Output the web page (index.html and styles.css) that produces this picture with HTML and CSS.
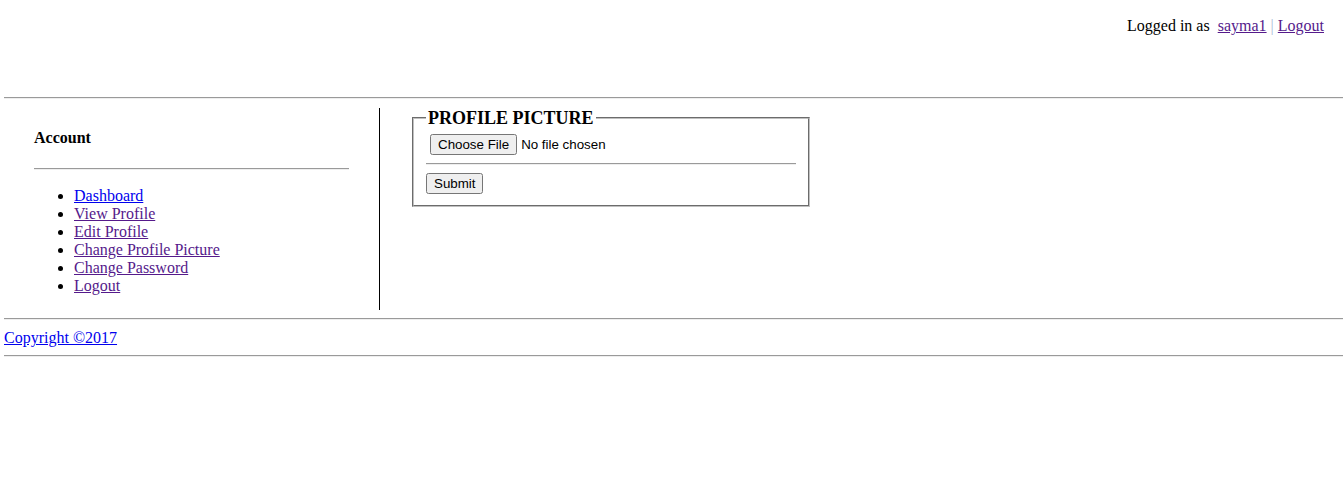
FILE: index.html
```html
<!DOCTYPE html>
<html>
<head>
<meta charset="utf-8">
<title>Change Profile Picture</title>
<link rel="stylesheet" href="styles.css">
</head>
<body>
<div class="page">
  <div class="header">
    <span class="login">Logged in as&nbsp; <a class="visited" href="#">sayma1</a> <span class="sep">|</span> <a class="visited" href="#">Logout</a></span>
  </div>
  <hr class="rule top-rule">
  <div class="main">
    <div class="sidebar">
      <h4 class="side-title">Account</h4>
      <hr class="rule side-rule">
      <ul class="menu">
        <li><a class="link" href="#">Dashboard</a></li>
        <li><a class="visited" href="#">View Profile</a></li>
        <li><a class="visited" href="#">Edit Profile</a></li>
        <li><a class="visited" href="#">Change Profile Picture</a></li>
        <li><a class="visited" href="#">Change Password</a></li>
        <li><a class="visited" href="#">Logout</a></li>
      </ul>
    </div>
    <div class="content">
      <form class="pic-form">
        <fieldset class="box">
          <legend class="box-legend">PROFILE PICTURE</legend>
          <input class="file" type="file">
          <hr class="rule form-rule">
          <input class="submit" type="submit" value="Submit">
        </fieldset>
      </form>
    </div>
  </div>
  <hr class="rule">
  <div class="footer"><a class="link" href="#">Copyright ©2017</a></div>
  <hr class="rule">
</div>
</body>
</html>
```

FILE: styles.css
```css
html, body {
  margin: 0;
  padding: 0;
  background: #fff;
}
body {
  font-family: "Liberation Serif", "Times New Roman", serif;
  font-size: 16px;
  color: #000;
}
.page {
  padding-left: 4px;
}
.link { color: #0000ee; }
.visited { color: #551a8b; }
.rule {
  height: 0;
  margin: 8px 0;
  border: 0;
  border-top: 1px solid #9a9a9a;
  border-bottom: 1px solid #eeeeee;
}
.header {
  height: 97px;
  box-sizing: border-box;
  padding-top: 17px;
  padding-right: 19px;
  text-align: right;
}
.top-rule { margin: 0 0 9px; }
.login { white-space: pre; }
.sep { color: #a9bcd6; }
.main {
  display: flex;
  align-items: stretch;
}
.sidebar {
  flex: none;
  width: 376px;
  box-sizing: border-box;
  border-right: 1px solid #000;
  padding: 0 30px;
}
.side-title {
  font-size: 16px;
  font-weight: bold;
  margin: 21px 0;
}
.side-rule { margin: 21px 0 17px; }
.menu {
  margin: 17px 0 15px;
  padding-left: 40px;
  line-height: 18px;
}
.content {
  flex: 1;
  padding-left: 32px;
}
.pic-form { margin: 0; }
.box {
  width: 398px;
  box-sizing: border-box;
  margin: 0;
  padding: 0 12px 11px;
  border: 2px groove rgb(192,192,192);
}
.box-legend {
  font-size: 18px;
  font-weight: bold;
  padding: 0 2px;
  line-height: 20px;
}
.file {
  margin: 6px 0 0 4px;
  font-family: "Liberation Sans", Arial, sans-serif;
  font-size: 13.33px;
}
.form-rule { margin: 8px 0; }
.submit {
  font-family: "Liberation Sans", Arial, sans-serif;
  font-size: 13.33px;
  margin: 0;
}
.footer {
  line-height: 18px;
  padding-top: 1px;
}
```
